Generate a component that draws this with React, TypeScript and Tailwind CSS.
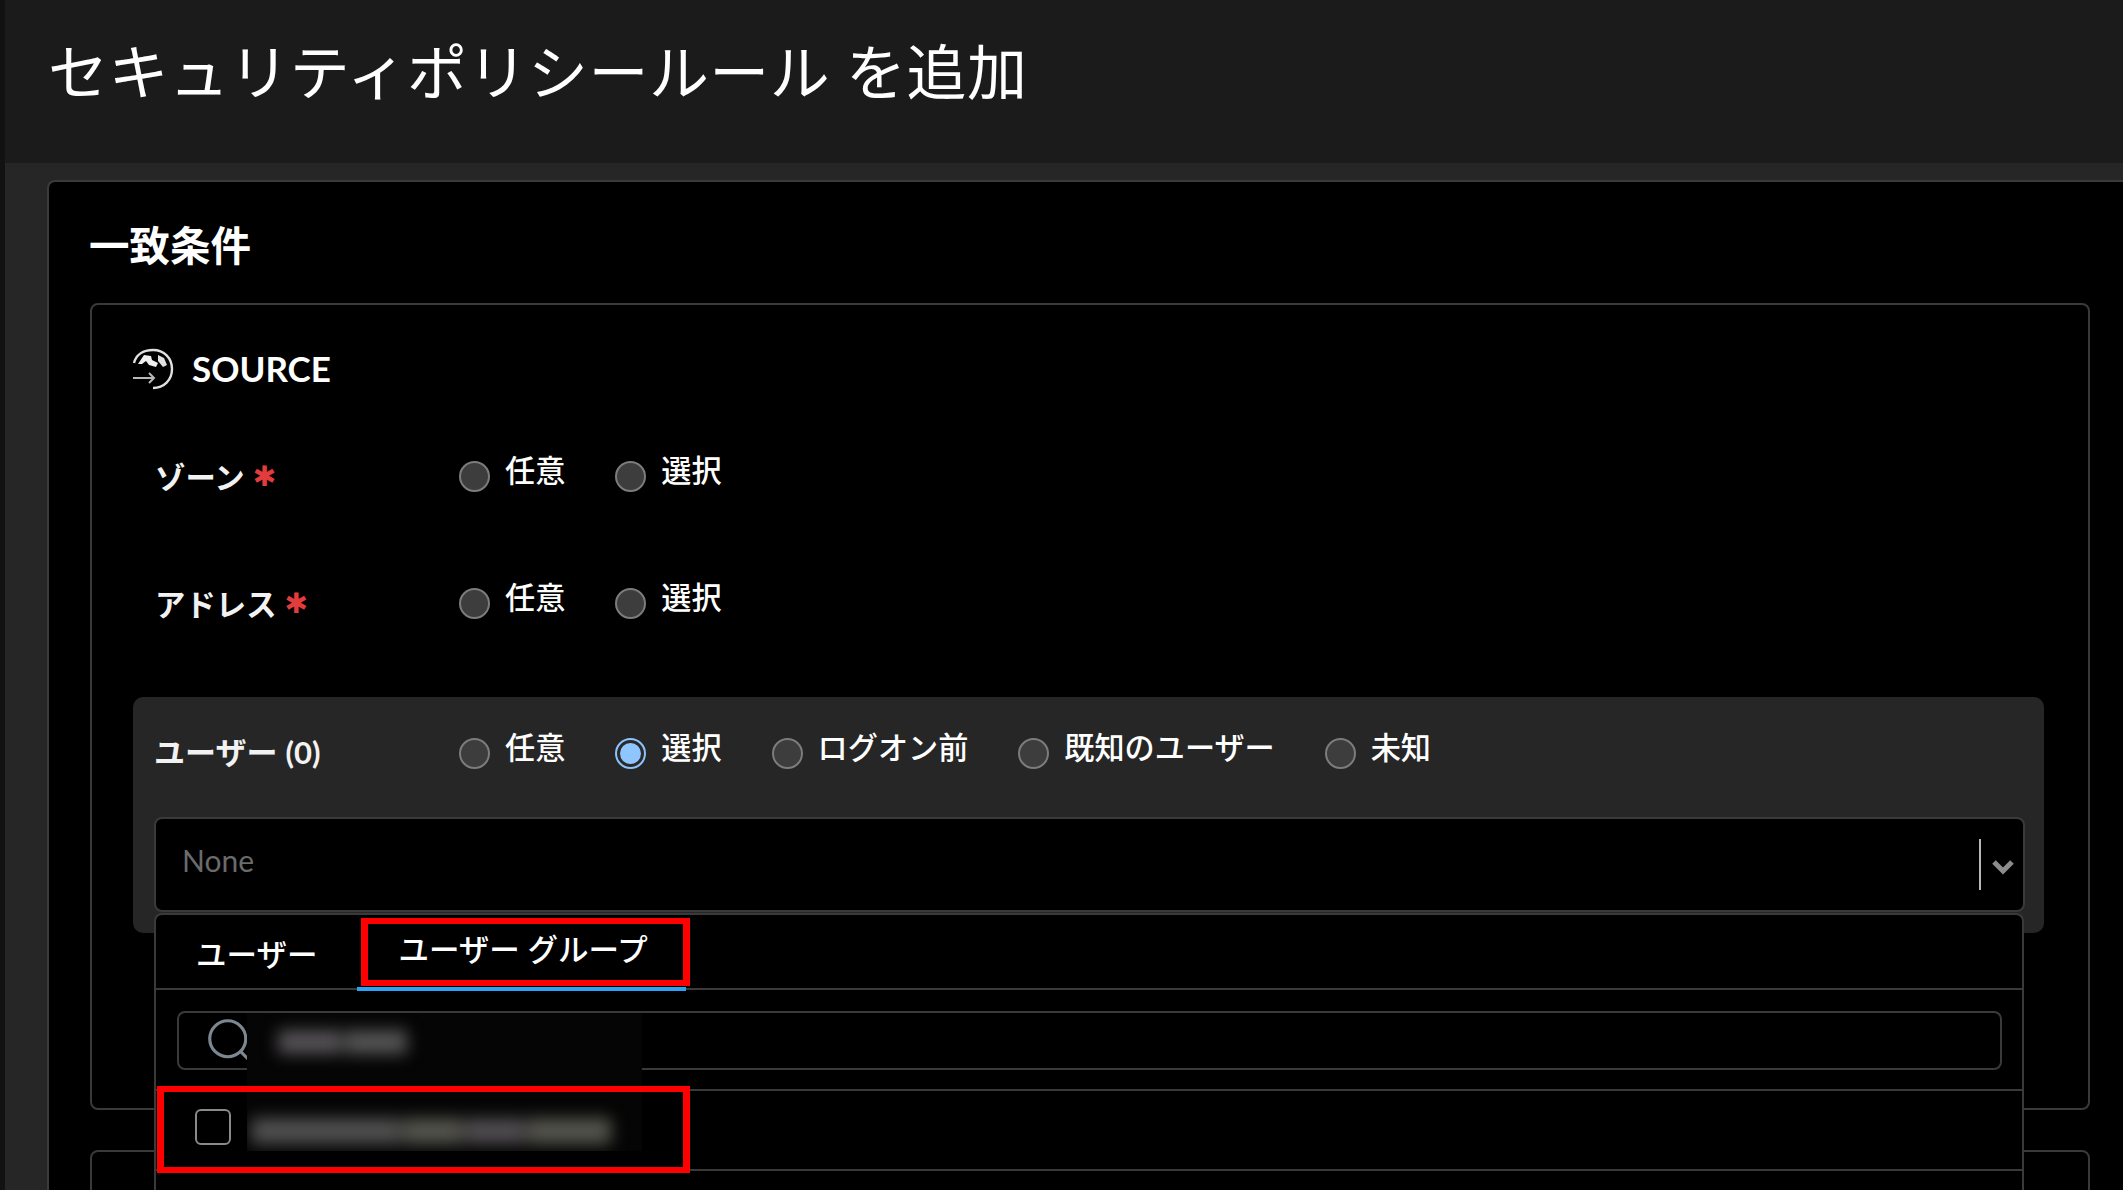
import { Search } from 'lucide-react';

function Radio({ label, checked }: { label: string; checked?: boolean }) {
  return (
    <label className="mr-[50px] flex items-start">
      {checked ? (
        <span className="mt-[5px] flex h-[31px] w-[31px] items-center justify-center rounded-full border-2 border-[#8dc3fb] bg-[#2a2a2a]">
          <span className="h-[21px] w-[21px] rounded-full bg-[#90c6ff]" />
        </span>
      ) : (
        <span className="mt-[5px] h-[31px] w-[31px] rounded-full border-2 border-[#7c7c7c] bg-[#3d3d3d]" />
      )}
      <span className="ml-[15px] -mt-px text-[30.15px] leading-[30px] font-medium text-white">{label}</span>
    </label>
  );
}

function FieldLabel({ text }: { text: string }) {
  return (
    <div className="flex w-[304px] shrink-0 items-start pt-[6px] text-[30.4px] leading-[30px] font-bold text-[#f2f2f2]">
      <span>{text}</span>
      <span className="ml-[8px] font-['DejaVu_Sans',sans-serif] text-[28px] leading-[30px] text-[#e23c3c]">✱</span>
    </div>
  );
}

function SourceIcon() {
  return (
    <svg width="44" height="44" viewBox="0 0 44 44" fill="none" className="-ml-[3px] shrink-0">
      <path d="M4 17C6 9 13 4 23 4c11 0 19 8 19 19S34 42 23 42" stroke="#e0e0e0" strokeWidth="2.4" />
      <path d="M8 18l6-9 7 1 1 4 6 3-2 4-7-2-3-4-4 3z" fill="#f0f0f0" />
      <path d="M28 9l6 3 3 7-4 2-5-6z" fill="#e0e0e0" />
      <path d="M3 32h21M19 27l5 5-5 5" stroke="#b8b8b8" strokeWidth="2" />
    </svg>
  );
}

function RedBox({ className }: { className: string }) {
  return <div className={`absolute border-x-[7px] border-y-[6px] border-[#ff0000] ${className}`} />;
}

function Dropdown() {
  return (
    <div className="absolute top-[216px] left-[21px] z-10 h-[320px] w-[1870px] rounded-t-[8px] border-2 border-b-0 border-[#3a3a3a] bg-black">
      <div className="flex h-[75px] items-start border-b-2 border-[#3a3a3a] text-[30.5px] leading-[30px] font-medium text-white">
        <span className="mt-[24px] ml-[40px]">ユーザー</span>
        <span className="mt-[19px] ml-[81px]">ユーザー グループ</span>
      </div>
      <div className="absolute top-[72px] left-[201px] h-[4px] w-[329px] bg-[#2ea1f0]" />
      <div className="h-[101px] border-b-2 border-[#3a3a3a] pt-[21px] pr-[20px] pl-[21px]">
        <div className="flex h-[59px] items-center rounded-[8px] border-2 border-[#3a3a3a] pl-[24px]">
          <Search size={54} strokeWidth={1.4} className="text-[#7d8790]" />
        </div>
      </div>
      <div className="flex h-[80px] items-center border-b-2 border-[#3a3a3a] pb-[6px] pl-[39px]">
        <span className="h-[36px] w-[36px] rounded-[6px] border-2 border-[#8a8a8a]" />
      </div>
      {/* redacted search text and row label */}
      <div className="absolute top-[98px] left-[91px] h-[138px] w-[395px] overflow-hidden bg-[#050505]">
        <div className="absolute top-[17px] left-[31px] flex gap-[3px] blur-[8px]">
          <span className="h-[24px] w-[64px] bg-[#555255]" />
          <span className="h-[24px] w-[62px] bg-[#555555]" />
        </div>
        <div className="absolute top-[105px] left-[4px] flex gap-[2px] blur-[8px]">
          <span className="h-[26px] w-[150px] bg-[#505050]" />
          <span className="h-[26px] w-[60px] bg-[#55554e]" />
          <span className="h-[26px] w-[60px] bg-[#504d50]" />
          <span className="h-[26px] w-[84px] bg-[#55554e]" />
        </div>
      </div>
      <RedBox className="top-[3px] left-[205px] h-[68px] w-[329px]" />
      <RedBox className="top-[171px] left-[1px] h-[87px] w-[533px]" />
    </div>
  );
}

export default function App() {
  return (
    <div className="flex h-[1190px] w-full overflow-hidden bg-[#262626] font-['Lato','Noto_Sans_CJK_JP',sans-serif]">
      <div className="w-[5px] shrink-0 bg-[#121212]" />
      <div className="flex min-w-0 flex-1 flex-col">
        <header className="flex h-[163px] shrink-0 items-start bg-[#1b1b1b] pt-[30px] pl-[43px]">
          <h1 className="text-[60px] leading-[84px] font-normal tracking-[0.45px] whitespace-nowrap text-white">セキュリティポリシールール を追加</h1>
        </header>
        <div className="flex-1 pt-[17px] pl-[42px]">
          <main className="h-full rounded-tl-[8px] border-t-2 border-l-2 border-[#3a3a3a] bg-black pt-[42px] pr-[33px] pl-[41px]">
            <h2 className="-ml-px text-[40.5px] leading-[44px] font-bold text-white">一致条件</h2>
            <section className="mt-[35px] h-[807px] rounded-[8px] border-2 border-[#3a3a3a] pt-[41px] pr-[44px] pl-[41px]">
              <div className="flex items-center">
                <SourceIcon />
                <span className="ml-[18px] text-[35px] leading-[42px] font-bold text-white">SOURCE</span>
              </div>
              <div className="mt-[66px] flex h-[60px] pl-[22px]">
                <FieldLabel text="ゾーン" />
                <Radio label="任意" />
                <Radio label="選択" />
              </div>
              <div className="mt-[67px] flex h-[60px] pl-[22px]">
                <FieldLabel text="アドレス" />
                <Radio label="任意" />
                <Radio label="選択" />
              </div>
              <div className="relative mt-[54px] h-[236px] rounded-[10px] bg-[#262626] pt-[36px] pr-[19px] pl-[21px]">
                <div className="flex h-[40px]">
                  <div className="flex w-[305px] shrink-0 items-start pt-[4px] text-[31px] leading-[30px] font-bold text-[#f2f2f2]">
                    ユーザー<span className="ml-[8px] text-[31px] font-bold">(0)</span>
                  </div>
                  <Radio label="任意" />
                  <Radio label="選択" checked />
                  <Radio label="ログオン前" />
                  <Radio label="既知のユーザー" />
                  <Radio label="未知" />
                </div>
                <div className="mt-[44px] flex h-[95px] items-center rounded-[8px] border-2 border-[#3a3a3a] bg-black pr-[8px] pl-[26px]">
                  <span className="-mt-[8px] flex-1 text-[30px] text-[#6b6b6b]">None</span>
                  <span className="h-[51px] w-[2px] bg-[#b8b8b8]" />
                  <svg width="24" height="18" viewBox="0 0 24 18" fill="none" className="mt-[4px] ml-[10px]">
                    <path d="M3 4l9 9 9-9" stroke="#8c8c8c" strokeWidth="5" />
                  </svg>
                </div>
                <Dropdown />
              </div>
            </section>
            <section className="mt-[40px] h-[200px] rounded-[8px] border-2 border-[#3a3a3a]" />
          </main>
        </div>
      </div>
    </div>
  );
}
